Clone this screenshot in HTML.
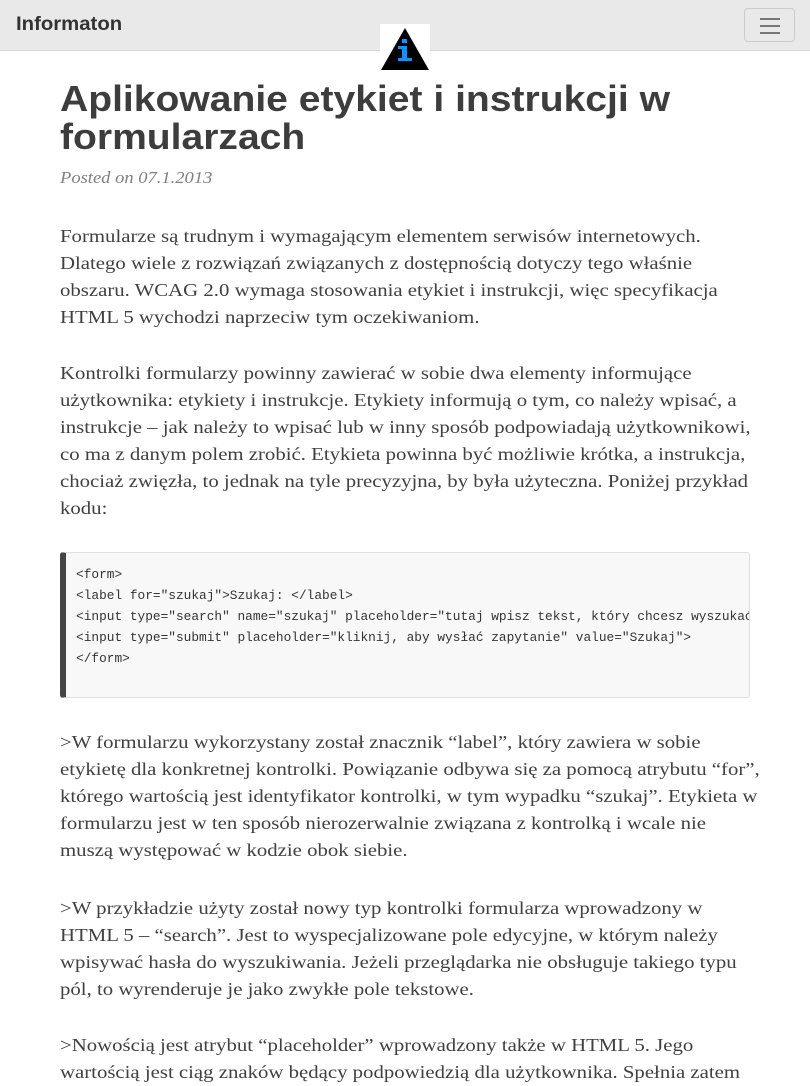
<!DOCTYPE html>
<html><head><meta charset="utf-8"><style>
*{margin:0;padding:0;box-sizing:border-box}
body{width:810px;height:1080px;overflow:hidden;background:#fff;font-family:"Liberation Serif",serif;color:#404040}
.nav{position:absolute;left:0;top:0;width:810px;height:51px;background:#e9e9e9;border-bottom:1px solid #d6d6d6}
.brand{position:absolute;left:16px;top:14px;font:bold 19px "Liberation Sans",sans-serif;color:#333;transform:scaleX(1.07);transform-origin:left}
.tog{position:absolute;left:744px;top:8px;width:51px;height:34px;border:1px solid #ccc;border-radius:4px}
.tog i{position:absolute;left:15px;width:20px;height:2px;background:#777}
.logo{position:absolute;left:380px;top:24px;width:50px;height:46px;background:#fff}
h1{position:absolute;left:60px;top:80px;font:bold 36px/38px "Liberation Sans",sans-serif;color:#3d3d3d;white-space:nowrap;transform:scaleX(1.085);transform-origin:left}
.meta{position:absolute;left:60px;top:168px;font-size:17px;color:#808080;font-style:italic;transform:scaleX(1.09);transform-origin:left}
.p{position:absolute;left:60px;font-size:18px;line-height:27px;white-space:nowrap;color:#404040;transform:scaleX(1.155);transform-origin:left}
.code{position:absolute;left:60px;top:552px;width:690px;height:146px;background:#f8f8f8;border:1px solid #e0e0e0;border-left:6px solid #444;border-radius:3px;overflow:hidden}
.code pre{position:absolute;left:10px;top:12px;font:12.5px/21px "Liberation Mono",monospace;color:#333;transform:scaleX(1.025);transform-origin:left}
</style></head><body>
<div class="nav"><div class="brand">Informaton</div>
<div class="tog"><i style="top:9px"></i><i style="top:16px"></i><i style="top:23px"></i></div></div>
<div class="logo"><svg width="50" height="46" viewBox="0 0 50 46"><polygon points="25,4 1,46 49,46" fill="#000"/><rect x="22" y="15" width="5" height="4" fill="#1e8fe6"/><rect x="22" y="22" width="5" height="14" fill="#1e8fe6"/><rect x="18" y="22" width="6" height="3" fill="#1e8fe6"/><rect x="18" y="34" width="14" height="3" fill="#1e8fe6"/></svg></div>
<h1>Aplikowanie etykiet i instrukcji w<br>formularzach</h1>
<div class="meta">Posted on 07.1.2013</div>
<div class="p" style="top:223px">Formularze są trudnym i wymagającym elementem serwisów internetowych.<br>Dlatego wiele z rozwiązań związanych z dostępnością dotyczy tego właśnie<br>obszaru. WCAG 2.0 wymaga stosowania etykiet i instrukcji, więc specyfikacja<br>HTML 5 wychodzi naprzeciw tym oczekiwaniom.</div>
<div class="p" style="top:360px">Kontrolki formularzy powinny zawierać w sobie dwa elementy informujące<br>użytkownika: etykiety i instrukcje. Etykiety informują o tym, co należy wpisać, a<br>instrukcje – jak należy to wpisać lub w inny sposób podpowiadają użytkownikowi,<br>co ma z danym polem zrobić. Etykieta powinna być możliwie krótka, a instrukcja,<br>chociaż zwięzła, to jednak na tyle precyzyjna, by była użyteczna. Poniżej przykład<br>kodu:</div>
<div class="code"><pre>&lt;form&gt;
&lt;label for="szukaj"&gt;Szukaj: &lt;/label&gt;
&lt;input type="search" name="szukaj" placeholder="tutaj wpisz tekst, który chcesz wyszukać"&gt;
&lt;input type="submit" placeholder="kliknij, aby wysłać zapytanie" value="Szukaj"&gt;
&lt;/form&gt;</pre></div>
<div class="p" style="top:729px">&gt;W formularzu wykorzystany został znacznik “label”, który zawiera w sobie<br>etykietę dla konkretnej kontrolki. Powiązanie odbywa się za pomocą atrybutu “for”,<br>którego wartością jest identyfikator kontrolki, w tym wypadku “szukaj”. Etykieta w<br>formularzu jest w ten sposób nierozerwalnie związana z kontrolką i wcale nie<br>muszą występować w kodzie obok siebie.</div>
<div class="p" style="top:895px">&gt;W przykładzie użyty został nowy typ kontrolki formularza wprowadzony w<br>HTML 5 – “search”. Jest to wyspecjalizowane pole edycyjne, w którym należy<br>wpisywać hasła do wyszukiwania. Jeżeli przeglądarka nie obsługuje takiego typu<br>pól, to wyrenderuje je jako zwykłe pole tekstowe.</div>
<div class="p" style="top:1032px">&gt;Nowością jest atrybut “placeholder” wprowadzony także w HTML 5. Jego<br>wartością jest ciąg znaków będący podpowiedzią dla użytkownika. Spełnia zatem</div>
</body></html>
